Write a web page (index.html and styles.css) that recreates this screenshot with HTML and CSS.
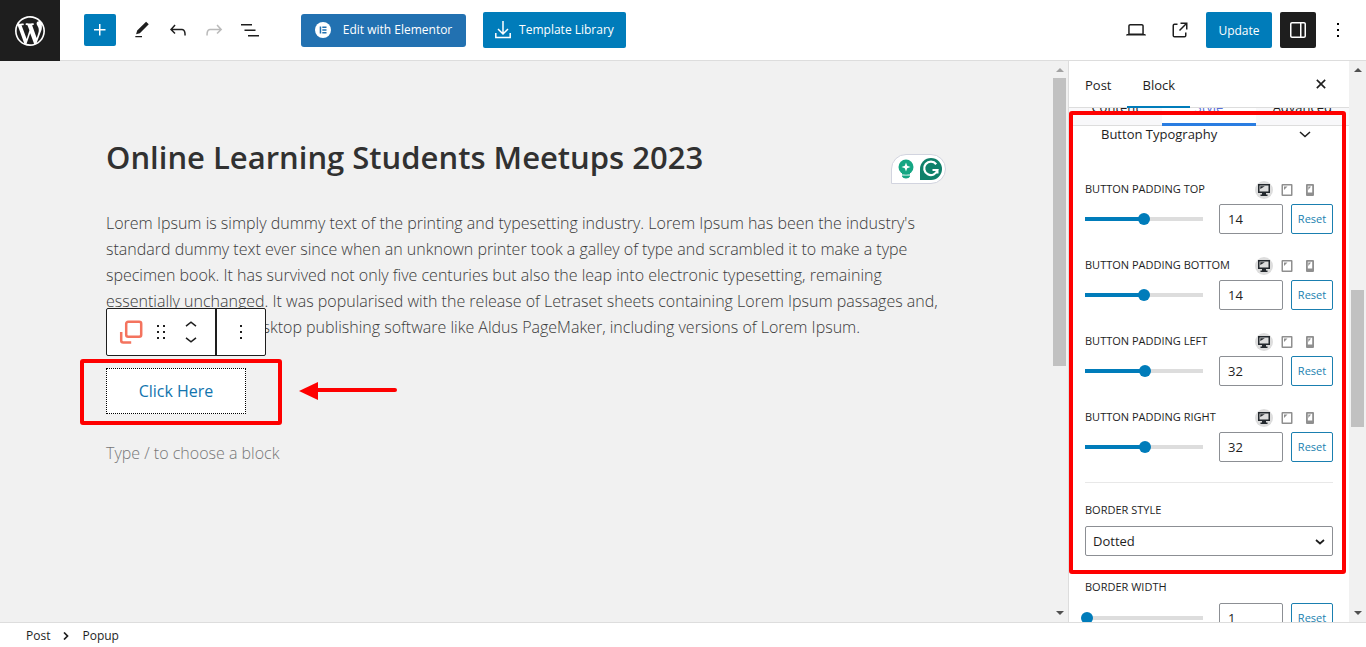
FILE: index.html
```html
<!DOCTYPE html>
<html lang="en">
<head>
<meta charset="utf-8">
<meta name="viewport" content="width=device-width, initial-scale=1">
<title>Edit Post</title>
<link rel="stylesheet" href="styles.css">
</head>
<body>
<svg class="defs" aria-hidden="true">
  <symbol id="monitor" viewBox="0 0 12 12"><path fill-rule="evenodd" d="M0 0h12v9H8v1.500h1.500V12h-7v-1.500H4V9H0zM1.500 1.500v6h9v-6z"/><path d="M2.300 2.300h4.500L2.300 5z"/></symbol>
  <symbol id="tablet" viewBox="0 0 12 12"><path fill-rule="evenodd" d="M1.500 0h9q1 0 1 1v10q0 1-1 1h-9q-1 0-1-1V1q0-1 1-1zM2 1.500v9h8v-9z"/><path d="M3 2.500h3.500L3 6z"/></symbol>
  <symbol id="phone" viewBox="0 0 12 12"><path fill-rule="evenodd" d="M3 0h6q1 0 1 1v10q0 1-1 1H3q-1 0-1-1V1q0-1 1-1zM3.800 1.800V8.500h4.400V1.800z"/><path d="M4.300 2.500H7L4.300 6z"/></symbol>
  <symbol id="more" viewBox="0 0 24 24"><path d="M13 19h-2v-2h2v2zm0-6h-2v-2h2v2zm0-6h-2V5h2v2z"/></symbol>
</svg>

<header class="topbar">
  <a class="site-logo" href="#" aria-label="View posts"><svg width="30" height="30" viewBox="0 0 20 20"><path d="M20 10c0-5.510-4.490-10-10-10C4.480 0 0 4.490 0 10c0 5.520 4.480 10 10 10 5.510 0 10-4.480 10-10zM7.780 15.370L4.370 6.220c.55-.02 1.170-.08 1.170-.08.5-.06.44-1.130-.06-1.110 0 0-1.450.11-2.370.11-.18 0-.37 0-.58-.01C4.120 2.690 6.870 1.110 10 1.110c2.330 0 4.450.87 6.050 2.340-.68-.11-1.650.39-1.650 1.580 0 .74.45 1.360.9 2.100.35.61.55 1.360.55 2.460 0 1.490-1.400 5-1.400 5l-3.030-8.370c.54-.02.82-.17.82-.17.5-.05.44-1.250-.06-1.220 0 0-1.440.12-2.380.12-.87 0-2.330-.12-2.330-.12-.5-.03-.56 1.200-.06 1.220l.92.08 1.260 3.410zM17.410 10c.24-.64.74-1.870.43-4.250.7 1.290 1.050 2.710 1.050 4.250 0 3.290-1.730 6.240-4.400 7.780.97-2.590 1.940-5.200 2.920-7.780zM6.100 18.090C3.120 16.650 1.110 13.530 1.110 10c0-1.300.23-2.480.72-3.590C3.250 10.300 4.670 14.200 6.100 18.090zm4.030-6.630l2.580 6.980c-.86.29-1.760.45-2.710.45-.79 0-1.570-.11-2.290-.33.81-2.380 1.620-4.740 2.420-7.100z"/></svg></a>
  <button class="inserter" aria-label="Add block"><svg width="24" height="24" viewBox="0 0 24 24"><path d="M11 12.500V17.500H12.500V12.500H17.500V11H12.500V6H11V11H6V12.500H11Z"/></svg></button>
  <div class="tools">
    <button class="icon-btn" aria-label="Tools"><svg width="20" height="20" viewBox="0 0 24 24"><path d="M20.100 5.100L16.900 2 6.200 12.700l-1.300 4.400 4.500-1.300L20.100 5.100zM4 20.800h8v-1.500H4v1.500z"/></svg></button>
    <button class="icon-btn" aria-label="Undo"><svg width="24" height="24" viewBox="0 0 24 24"><path d="M18.300 11.700c-.6-.6-1.400-.9-2.300-.9H6.700l2.900-3.300-1.100-1-4.500 5L8.500 16l1-1-2.700-2.700H16c.5 0 .9.2 1.300.5 1 1 1 3.400 1 4.500v.3h1.500v-.2c0-1.500 0-4.300-1.500-5.700z"/></svg></button>
    <button class="icon-btn" aria-label="Redo" disabled><svg width="24" height="24" viewBox="0 0 24 24"><path d="M15.600 6.500l-1.100 1 2.900 3.300H8c-.9 0-1.700.3-2.300.9-1.400 1.500-1.400 4.200-1.400 5.600v.2h1.500v-.3c0-1.100 0-3.500 1-4.500.3-.3.7-.5 1.300-.5h9.200L14.500 15l1.100 1.100 4.600-4.600-4.600-5z"/></svg></button>
    <button class="icon-btn" aria-label="Document overview"><svg width="24" height="24" viewBox="0 0 24 24"><path d="M3 6h11v1.500H3V6Zm3.500 5.500h11V13h-11v-1.500ZM21 17H10v1.500h11V17Z"/></svg></button>
  </div>
  <button class="elementor"><svg width="16" height="16" viewBox="0 0 16 16"><circle cx="8" cy="8" r="8" fill="#fff"/><path fill="#2271b1" d="M4.700 4.500h1.500v7H4.700zM7.300 4.500h4.200v1.400H7.300zM7.300 7.300h4.200v1.400H7.300zM7.300 10.100h4.200v1.400H7.300z"/></svg>Edit with Elementor</button>
  <button class="library"><svg width="16" height="18" viewBox="0 0 16 18" fill="none" stroke="#fff" stroke-width="1.500"><path d="M8 0v13M3 8l5 5 5-5M.8 12v4.500h14.400V12"/></svg>Template Library</button>
  <div class="actions">
    <button class="icon-btn" aria-label="Preview"><svg width="24" height="24" viewBox="0 0 24 24"><path d="M20.500 16h-.7V8c0-1.100-.9-2-2-2H6.200c-1.100 0-2 .9-2 2v8h-.7c-.8 0-1.500.7-1.500 1.500h20c0-.8-.7-1.500-1.500-1.500zM5.700 8c0-.3.2-.5.5-.5h11.600c.3 0 .5.2.5.5v7.600H5.700V8z"/></svg></button>
    <button class="icon-btn" aria-label="View post"><svg width="24" height="24" viewBox="0 0 24 24"><path d="M19.500 4.500h-7V6h4.440l-5.970 5.970 1.060 1.060L18 7.060v4.440h1.500v-7Zm-13 1a2 2 0 0 0-2 2v10a2 2 0 0 0 2 2h10a2 2 0 0 0 2-2v-3H17v3a.5.5 0 0 1-.5.5h-10a.5.5 0 0 1-.5-.5v-10a.5.5 0 0 1 .5-.5h3V5.500h-3Z"/></svg></button>
    <button class="update">Update</button>
    <button class="icon-btn pressed" aria-label="Settings"><svg width="24" height="24" viewBox="0 0 24 24"><path d="M18 4H6c-1.100 0-2 .9-2 2v12c0 1.100.9 2 2 2h12c1.100 0 2-.9 2-2V6c0-1.100-.9-2-2-2zm-4 14.500H6c-.3 0-.5-.2-.5-.5V6c0-.3.2-.5.5-.5h8v13zm4.500-.5c0 .3-.2.5-.5.5h-2.500v-13H18c.3 0 .5.2.5.5v12z"/></svg></button>
    <button class="options" aria-label="Options"><svg width="24" height="24"><use href="#more"/></svg></button>
  </div>
</header>

<div class="workspace">
  <main class="canvas">
    <article class="post">
      <h1>Online Learning Students Meetups 2023</h1>
      <p class="text">Lorem Ipsum is simply dummy text of the printing and typesetting industry. Lorem Ipsum has been the industry's<br>standard dummy text ever since when an unknown printer took a galley of type and scrambled it to make a type<br>specimen book. It has survived not only five centuries but also the leap into electronic typesetting, remaining<br>essentially unchanged. It was popularised with the release of Letraset sheets containing Lorem Ipsum passages and,<br>more recently with desktop publishing software like Aldus PageMaker, including versions of Lorem Ipsum.</p>
      <div class="popup-block">
        <div class="block-toolbar">
          <div class="group main-group">
            <button aria-label="Popup"><svg width="24" height="24" viewBox="0 0 24 24" fill="none" stroke="#f4735e" stroke-width="2.500"><rect x="7.200" y="1.700" width="15" height="15" rx="2"/><path d="M2.200 12v8.500q0 2 2 2h8"/></svg></button>
            <button aria-label="Drag"><svg width="24" height="24" viewBox="0 0 24 24"><path d="M8 7h2V5H8v2zm0 6h2v-2H8v2zm0 6h2v-2H8v2zm6-14v2h2V5h-2zm0 8h2v-2h-2v2zm0 6h2v-2h-2v2z"/></svg></button>
            <div class="movers">
              <button aria-label="Move up"><svg width="12" height="6" viewBox="0 0 12 6" fill="none" stroke="#1e1e1e" stroke-width="1.500"><path d="M1 5.200l5-4 5 4"/></svg></button>
              <button aria-label="Move down"><svg width="12" height="6" viewBox="0 0 12 6" fill="none" stroke="#1e1e1e" stroke-width="1.500"><path d="M1 .8l5 4 5-4"/></svg></button>
            </div>
          </div>
          <div class="group more-group"><button aria-label="Options"><svg width="24" height="24"><use href="#more"/></svg></button></div>
        </div>
        <button class="popup-button">Click Here</button>
        <div class="mark mark-button"></div>
        <svg class="arrow" width="100" height="18" viewBox="0 0 100 18"><path fill="#fe0000" d="M0 9L19 0v18z"/><path stroke="#fe0000" stroke-width="4" stroke-linecap="round" d="M18 8h78"/></svg>
      </div>
      <p class="placeholder">Type / to choose a block</p>
      <div class="assistant"><svg width="18" height="22" viewBox="0 0 18 22"><circle cx="9" cy="9" r="7.500" fill="#15a683"/><path fill="#15a683" d="M5 14h8v2.500H5zM5 17.500h8v1q-1 2-4 2t-4-2z"/><path fill="#fff" d="M9 4.500l1.200 3.300L13.500 9l-3.300 1.200L9 13.500l-1.200-3.300L4.500 9l3.300-1.200z"/></svg><svg width="22" height="22" viewBox="0 0 22 22"><path fill="#0f806a" d="M11 0a11 11 0 1 1 0 22H0V11A11 11 0 0 1 11 0z"/><path fill="none" stroke="#fff" stroke-width="2.200" d="M16.200 6.200A6.700 6.700 0 1 0 17.400 12H12.500M17.400 11v4.500"/></svg></div>
    </article>
  </main>
  <div class="scrollbar canvas-scroll"><i class="up dim"></i><i class="thumb"></i><i class="down"></i></div>

  <aside class="sidebar">
    <div class="sidebar-body">
      <div class="sidebar-tabs">
        <button>Post</button><button class="active">Block</button>
        <button class="close" aria-label="Close"><svg width="10" height="10" viewBox="0 0 12 12" stroke="#1e1e1e" stroke-width="1.900"><path d="M1 1l10 10M11 1L1 11"/></svg></button>
      </div>
      <div class="panel">
        <div class="panel-tabs"><button>Content</button><button class="active">Style</button><button>Advanced</button></div>
        <button class="toggle">Button Typography<svg width="12" height="7" viewBox="0 0 12 7" fill="none" stroke="#1e1e1e" stroke-width="1.500"><path d="M1 1l5 4.500L11 1"/></svg></button>
        <div class="fields">
          <div class="field">
            <div class="field-head"><label for="pt">BUTTON PADDING TOP</label><div class="devices"><button class="on" aria-label="Desktop"><svg><use href="#monitor"/></svg></button><button aria-label="Tablet"><svg><use href="#tablet"/></svg></button><button aria-label="Mobile"><svg><use href="#phone"/></svg></button></div></div>
            <div class="field-row"><input type="range" aria-label="Button padding top" min="0" max="100" value="50" style="--value:50%"><input class="number" id="pt" type="text" value="14"><button class="reset">Reset</button></div>
          </div>
          <div class="field">
            <div class="field-head"><label for="pb">BUTTON PADDING BOTTOM</label><div class="devices"><button class="on" aria-label="Desktop"><svg><use href="#monitor"/></svg></button><button aria-label="Tablet"><svg><use href="#tablet"/></svg></button><button aria-label="Mobile"><svg><use href="#phone"/></svg></button></div></div>
            <div class="field-row"><input type="range" aria-label="Button padding bottom" min="0" max="100" value="50" style="--value:50%"><input class="number" id="pb" type="text" value="14"><button class="reset">Reset</button></div>
          </div>
          <div class="field">
            <div class="field-head"><label for="pl">BUTTON PADDING LEFT</label><div class="devices"><button class="on" aria-label="Desktop"><svg><use href="#monitor"/></svg></button><button aria-label="Tablet"><svg><use href="#tablet"/></svg></button><button aria-label="Mobile"><svg><use href="#phone"/></svg></button></div></div>
            <div class="field-row"><input type="range" aria-label="Button padding left" min="0" max="100" value="51" style="--value:51%"><input class="number" id="pl" type="text" value="32"><button class="reset">Reset</button></div>
          </div>
          <div class="field">
            <div class="field-head"><label for="pr">BUTTON PADDING RIGHT</label><div class="devices"><button class="on" aria-label="Desktop"><svg><use href="#monitor"/></svg></button><button aria-label="Tablet"><svg><use href="#tablet"/></svg></button><button aria-label="Mobile"><svg><use href="#phone"/></svg></button></div></div>
            <div class="field-row"><input type="range" aria-label="Button padding right" min="0" max="100" value="51" style="--value:51%"><input class="number" id="pr" type="text" value="32"><button class="reset">Reset</button></div>
          </div>
          <hr>
          <div class="field border-field">
            <div class="field-head"><label for="bs">BORDER STYLE</label></div>
            <div class="select"><select id="bs"><option>Dotted</option></select><svg width="10" height="6" viewBox="0 0 10 6" fill="none" stroke="#1e1e1e" stroke-width="1.700"><path d="M1 1l4 3.500L9 1"/></svg></div>
          </div>
          <div class="field border-field">
            <div class="field-head"><label for="bw">BORDER WIDTH</label></div>
            <div class="field-row"><input type="range" aria-label="Border width" min="0" max="100" value="2" style="--value:2%"><input class="number" id="bw" type="text" value="1"><button class="reset">Reset</button></div>
          </div>
        </div>
      </div>
    </div>
    <div class="scrollbar side-scroll"><i class="up"></i><i class="thumb"></i><i class="down"></i></div>
    <div class="mark mark-panel"></div>
  </aside>
</div>

<footer class="breadcrumb"><a href="#">Post</a><svg width="6" height="8" viewBox="0 0 6 8" fill="none" stroke="#1e1e1e" stroke-width="1.700"><path d="M1 .5L4.500 4 1 7.500"/></svg><a href="#">Popup</a></footer>
</body>
</html>
```
FILE: styles.css
```css
* { box-sizing: border-box; }
body {
  margin: 0;
  height: 100vh;
  display: flex;
  flex-direction: column;
  overflow: hidden;
  background: #fff;
  color: #1e1e1e;
  font: 13px/18px "Open Sans", "Noto Sans", sans-serif;
}
button, input, select {
  font: inherit;
  color: inherit;
  margin: 0;
}
button {
  border: 0;
  padding: 0;
  background: none;
  display: flex;
  align-items: center;
  justify-content: center;
  white-space: nowrap;
}
svg { display: block; flex: none; }
.defs { position: absolute; width: 0; height: 0; }

.topbar {
  flex: none;
  display: flex;
  align-items: center;
  height: 61px;
  border-bottom: 1px solid #ddd;
}
.site-logo {
  display: flex;
  align-items: center;
  justify-content: center;
  width: 60px;
  height: 61px;
  margin-bottom: -1px;
  background: #1e1e1e;
  fill: #fff;
}
.inserter {
  width: 32px;
  height: 32px;
  margin-left: 24px;
  border-radius: 2px;
  background: #007cba;
  fill: #fff;
}
.tools { display: flex; margin: 0 33px 0 8px; }
.icon-btn { width: 36px; height: 36px; fill: #1e1e1e; }
.icon-btn:disabled { opacity: .3; }
.elementor {
  width: 165px;
  height: 33px;
  gap: 12px;
  border-radius: 3px;
  background: #2271b1;
  color: #fff;
}
.library {
  width: 143px;
  height: 36px;
  margin-left: 17px;
  gap: 8px;
  border-radius: 2px;
  background: #007cba;
  color: #fff;
}
.elementor, .library { font-size: 12px; font-weight: 500; }
.actions { display: flex; gap: 8px; margin-left: auto; padding-right: 14px; }
.update {
  width: 66px;
  height: 36px;
  padding-top: 2px;
  border-radius: 2px;
  background: #007cba;
  color: #fff;
  font-size: 12px;
  font-weight: 500;
}
.pressed { border-radius: 2px; background: #1e1e1e; fill: #fff; }
.options { width: 28px; }

.workspace { flex: 1; display: flex; min-height: 0; }
.canvas { flex: 1; min-width: 0; overflow: hidden; background: #f1f1f1; }
.post { position: relative; padding: 76px 105px 0 106px; color: #3a3a3a; }
h1 { margin: 0 0 33px; color: #313131; font: 600 31px/40px "Open Sans", sans-serif; white-space: nowrap; }
.text { margin: 0 0 28px; font-size: 16px; font-weight: 300; line-height: 26px; white-space: nowrap; }
.placeholder { margin: 26px 0 0; color: #777; font-size: 16px; font-weight: 300; line-height: 26px; }
.popup-block { position: relative; }
.popup-button {
  width: 140px;
  height: 46px;
  padding-bottom: 1px;
  border: 1px dotted #000;
  background: #fff;
  color: #1274ae;
  font-size: 16px;
}
.block-toolbar {
  position: absolute;
  left: 0;
  bottom: 58px;
  display: flex;
  width: 160px;
  height: 48px;
  border: 1px solid #1e1e1e;
  border-radius: 2px;
  background: #fff;
}
.group { display: flex; align-items: center; fill: #1e1e1e; }
.main-group { gap: 6px; padding: 0 18px 0 12px; border-right: 2px solid #1e1e1e; }
.more-group { flex: 1; justify-content: center; }
.movers { display: grid; gap: 10px; margin-left: 6px; }
.mark { position: absolute; border: 4px solid #fe0000; border-radius: 3px; pointer-events: none; }
.mark-button { left: -26px; top: -9px; width: 202px; height: 66px; }
.arrow { position: absolute; left: 193px; top: 14px; }
.assistant {
  position: absolute;
  right: 105px;
  top: 93px;
  display: flex;
  align-items: center;
  gap: 5px;
  height: 30px;
  padding: 0 3px 0 5px;
  border: 1px solid #d2d4df;
  border-radius: 15px 15px 15px 0;
  background: #fff;
}

.scrollbar { flex: none; display: flex; flex-direction: column; align-items: center; width: 17px; background: #f1f1f1; }
.up, .down { border: 4px solid transparent; }
.up { margin-top: 7px; border-top-width: 0; border-bottom: 4px solid #505050; }
.up.dim { border-bottom-color: #a3a3a3; }
.down { margin: auto 0 7px; border-bottom-width: 0; border-top: 4px solid #505050; }
.thumb { width: 13px; background: #c1c1c1; }
.canvas-scroll .thumb { height: 288px; margin-top: 6px; }
.side-scroll .thumb { height: 137px; margin-top: 218px; }

.sidebar { flex: none; position: relative; display: flex; width: 298px; border-left: 1px solid #ddd; background: #fff; }
.sidebar-body { flex: 1; display: flex; flex-direction: column; min-width: 0; overflow: hidden; }
.sidebar-tabs { flex: none; display: flex; height: 47px; border-bottom: 1px solid #ddd; }
.sidebar-tabs button { height: 47px; padding: 0 16px; }
.sidebar-tabs .active { padding: 0 15px; box-shadow: inset 0 -2px #007cba; }
.sidebar-tabs .close { margin-left: auto; padding: 0 23px 2px; }
.panel { flex: 1; min-height: 0; overflow: hidden; }
.panel-tabs { display: grid; grid-template-columns: 1fr 1fr 1fr; height: 42px; margin-top: -24px; border-bottom: 1px solid #ddd; background: #f8f8fa; }
.panel-tabs button { height: 42px; padding-top: 3px; }
.panel-tabs .active { padding-top: 6px; background: #fff; border-bottom: 3px solid #2a7de1; color: #5a6fd8; }
.toggle { width: 100%; height: 18px; padding: 0 38px 2px 32px; justify-content: space-between; }
.fields { padding: 36px 16px 0; }
.field { display: grid; gap: 4px; margin-bottom: 22px; }
.field-head { display: flex; align-items: center; justify-content: space-between; height: 20px; font-size: 11px; }
.field-head label { padding-bottom: 2px; }
.devices { display: flex; gap: 5px; padding-right: 14px; fill: #8f8f8f; }
.devices button { width: 18px; height: 18px; border-radius: 9px; }
.devices .on { background: #ddd; fill: #23282d; }
.devices svg { width: 12px; height: 12px; }
.field-row { display: flex; align-items: center; height: 30px; }
input[type="range"] {
  appearance: none;
  flex: 1;
  min-width: 0;
  height: 12px;
  margin: 0 10px 0 -6px;
  background: linear-gradient(to right, #007cba var(--value), #ddd var(--value)) 6px center / calc(100% - 12px) 4px no-repeat;
}
input[type="range"]::-webkit-slider-thumb {
  appearance: none;
  width: 12px;
  height: 12px;
  border-radius: 6px;
  background: #007cba;
}
.number { width: 64px; height: 30px; margin-right: 8px; padding: 0 8px; border: 1px solid #8c8f94; border-radius: 2px; background: #fff; }
.reset { width: 42px; height: 30px; border: 1px solid #1a7fb0; border-radius: 2px; color: #1a7fb0; font-size: 11px; }
hr { width: 100%; height: 1px; margin: -2px 0 18px; border: 0; background: #e8e8e8; }
.border-field { gap: 5px; }
.select { position: relative; }
.select select { appearance: none; display: block; width: 100%; height: 30px; padding: 0 7px; border: 1px solid #8c8f94; border-radius: 2px; background: #fff; }
.select svg { position: absolute; right: 8px; top: 13px; pointer-events: none; }
.mark-panel { left: 0; top: 50px; width: 277px; height: 463px; }

.breadcrumb { flex: none; display: flex; align-items: center; gap: 13px; height: 25px; padding: 1px 0 0 26px; border-top: 1px solid #ddd; font-size: 12px; }
.breadcrumb a { color: inherit; text-decoration: none; }
```
